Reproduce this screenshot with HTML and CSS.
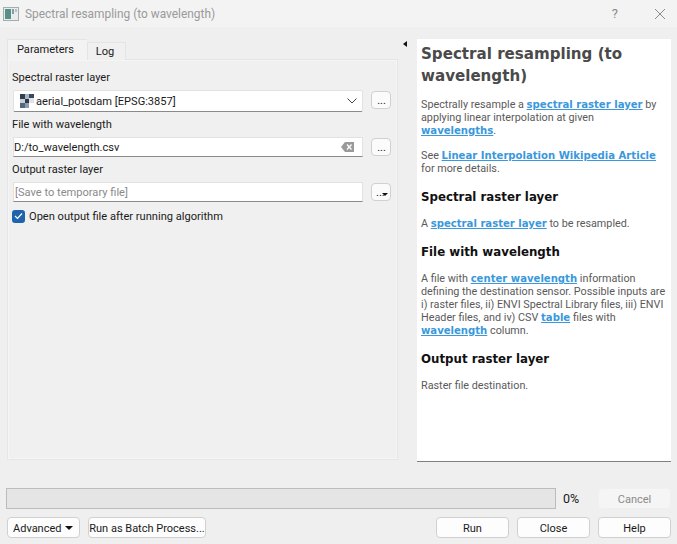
FILE: index.html
```html
<!DOCTYPE html>
<html lang="en">

<head>
    <meta charset="UTF-8">
    <title>Spectral resampling (to wavelength)</title>
    <link rel="stylesheet" href="styles.css">
</head>

<body>
    <div class="titlebar">
        <svg class="app-icon" width="16" height="16" viewBox="0 0 16 16">
            <rect x="0.5" y="1.5" width="15" height="13" fill="#e8eceb" stroke="#a3adad" />
            <rect x="2" y="3" width="6" height="10" fill="#5a8f88" />
            <rect x="9" y="3" width="2" height="5" fill="#8b9aa8" />
            <rect x="12" y="3" width="2" height="3" fill="#b4c1c7" />
        </svg>
        <span class="title">Spectral resampling (to wavelength)</span>
        <span class="title-help">?</span>
        <svg class="title-close" width="12" height="12" viewBox="0 0 12 12">
            <path d="M1 1 L11 11 M11 1 L1 11" stroke="#8a8a8a" stroke-width="1" fill="none" />
        </svg>
    </div>

    <div class="main">
        <div class="left">
            <div class="tabs">
                <div class="tab active">Parameters</div>
                <div class="tab">Log</div>
            </div>
            <div class="panel">
                <label class="field-label">Spectral raster layer</label>
                <div class="row">
                    <div class="combo">
                        <svg width="14" height="14" viewBox="0 0 14 14">
                            <rect x="0" y="0" width="5" height="5" fill="#2f3f52" />
                            <rect x="5" y="0" width="4" height="5" fill="#a9b3bd" />
                            <rect x="9" y="0" width="5" height="4" fill="#39485a" />
                            <rect x="0" y="5" width="5" height="4" fill="#c9d0d6" />
                            <rect x="5" y="5" width="4" height="4" fill="#2b3a4c" />
                            <rect x="9" y="4" width="5" height="5" fill="#dfe3e7" />
                            <rect x="0" y="9" width="5" height="5" fill="#53677c" />
                            <rect x="5" y="9" width="4" height="5" fill="#8d9cab" />
                        </svg>
                        <span class="combo-text">aerial_potsdam [EPSG:3857]</span>
                        <svg class="chevron" width="10" height="6" viewBox="0 0 10 6">
                            <path d="M0.5 0.5 L5 5 L9.5 0.5" stroke="#444" fill="none" />
                        </svg>
                    </div>
                    <button class="dots">...</button>
                </div>
                <label class="field-label">File with wavelength</label>
                <div class="row">
                    <div class="input">
                        <span class="input-text">D:/to_wavelength.csv</span>
                        <svg width="13" height="10" viewBox="0 0 13 10">
                            <path d="M4 0 H13 V10 H4 L0 5 Z" fill="#9a9a9a" />
                            <path d="M6 2.5 L10.5 7.5 M10.5 2.5 L6 7.5" stroke="#fff" stroke-width="1.3" />
                        </svg>
                    </div>
                    <button class="dots">...</button>
                </div>
                <label class="field-label">Output raster layer</label>
                <div class="row">
                    <div class="input">
                        <span class="input-text placeholder">[Save to temporary file]</span>
                    </div>
                    <button class="dots menu">...<span class="small-arrow"></span></button>
                </div>
                <div class="check-row">
                    <span class="checkbox">
                        <svg width="9" height="8" viewBox="0 0 9 8">
                            <path d="M1 4 L3.5 6.5 L8 1.5" stroke="#fff" stroke-width="1.2" fill="none" />
                        </svg>
                    </span>
                    <span>Open output file after running algorithm</span>
                </div>
            </div>
        </div>

        <div class="splitter"><span class="left-arrow"></span></div>

        <div class="help">
            <h1>Spectral resampling (to wavelength)</h1>
            <p>Spectrally resample a <a href="#">spectral raster layer</a> by applying linear interpolation at given <a href="#">wavelengths</a>.</p>
            <p>See <a href="#">Linear Interpolation Wikipedia Article</a> for more details.</p>
            <h2>Spectral raster layer</h2>
            <p>A <a href="#">spectral raster layer</a> to be resampled.</p>
            <h2>File with wavelength</h2>
            <p>A file with <a href="#">center wavelength</a> information defining the destination sensor. Possible inputs are i) raster files, ii) ENVI Spectral Library files, iii) ENVI Header files, and iv) CSV <a href="#">table</a> files with <a href="#">wavelength</a> column.</p>
            <h2>Output raster layer</h2>
            <p>Raster file destination.</p>
        </div>
    </div>

    <div class="progress-row">
        <div class="progress"></div>
        <span class="percent">0%</span>
        <button class="btn disabled">Cancel</button>
    </div>

    <div class="button-row">
        <button class="btn advanced">Advanced<span class="small-arrow"></span></button>
        <button class="btn batch">Run as Batch Process...</button>
        <span class="spacer"></span>
        <button class="btn">Run</button>
        <button class="btn">Close</button>
        <button class="btn">Help</button>
    </div>
</body>

</html>
```

FILE: styles.css
```css
html,
body {
    height: 100%;
}

body {
    margin: 0;
    width: 677px;
    height: 544px;
    overflow: hidden;
    display: flex;
    flex-direction: column;
    background-color: #efefef;
    font-family: Roboto, Arial, sans-serif;
    font-size: 11.1px;
    color: #1a1a1a;
}

.titlebar {
    height: 27px;
    display: flex;
    align-items: center;
    padding: 0 11px 0 3px;
    background-color: #f3f3f3;
}

.app-icon {
    margin-right: 6px;
}

.title {
    flex: 1;
    font-size: 11.9px;
    color: #9a9a9a;
}

.title-help {
    margin-right: 36px;
    font-size: 13px;
    color: #8a8a8a;
}

.main {
    height: 434px;
    display: flex;
    padding-left: 6px;
}

.left {
    width: 392px;
    padding-top: 13px;
}

.tabs {
    display: flex;
    height: 19px;
    padding-left: 1px;
}

.tab {
    width: 34px;
    height: 17px;
    margin-top: 2px;
    padding-right: 3px;
    line-height: 18px;
    text-align: center;
    background-color: #f0f0f0;
    border: 1px solid #e4e4e4;
    border-bottom: none;
}

.tab.active {
    width: 75px;
    height: 20px;
    margin-top: -1px;
    padding-right: 4px;
    line-height: 19px;
    background-color: #f3f3f3;
    border-right: none;
    position: relative;
    z-index: 1;
}

.panel {
    height: 401px;
    box-sizing: border-box;
    margin-left: 1px;
    padding: 7px 6px 0 4px;
    background-color: #f0f0f0;
    border: 1px solid #e6e6e6;
    border-top-color: #e4e4e4;
    box-shadow: inset 0 0 0 1px #f5f5f5;
}

.field-label {
    display: block;
    height: 22px;
    margin-bottom: 1px;
    line-height: 21px;
    white-space: nowrap;
}

.row {
    display: flex;
    align-items: flex-start;
    gap: 8px;
    margin-bottom: 2px;
}

.combo,
.input {
    flex: 1;
    box-sizing: border-box;
    display: flex;
    align-items: center;
    margin-left: 1px;
    background-color: #fff;
    border: 1px solid #e2e2e2;
    border-bottom: 1px solid #8a8a8a;
}

.combo {
    height: 22px;
    padding: 0 5px 0 6px;
    border-radius: 2px;
}

.combo-text {
    flex: 1;
    margin-left: 2px;
}

.input {
    height: 20px;
    padding: 0 8px 0 0;
}

.input-text {
    flex: 1;
}

.placeholder {
    padding-left: 1px;
    color: #8a8a8a;
}

.dots {
    width: 20px;
    height: 18px;
    margin-top: 1px;
    padding: 0 0 0 1px;
    position: relative;
    background-color: #fbfbfb;
    border: 1px solid #d0d0d0;
    border-radius: 4px;
    font-family: inherit;
    font-size: 11px;
    line-height: 18px;
    color: #1a1a1a;
}

.dots.menu {
    text-align: left;
    padding-left: 4px;
}

.dots.menu .small-arrow {
    position: absolute;
    right: 2px;
    bottom: 4px;
    border-width: 3px 3px 0;
}

.small-arrow {
    display: inline-block;
    border-style: solid;
    border-width: 4px 4px 0;
    border-color: #111 transparent transparent;
}

.check-row {
    display: flex;
    align-items: center;
    gap: 4px;
    height: 18px;
    margin: 5px 0 0;
}

.checkbox {
    width: 13px;
    height: 13px;
    display: flex;
    align-items: center;
    justify-content: center;
    background-color: #1f63ad;
    border-radius: 3px;
}

.splitter {
    width: 19px;
    padding-top: 14px;
    box-sizing: border-box;
    padding-left: 5px;
}

.left-arrow {
    display: block;
    width: 0;
    border-style: solid;
    border-width: 3px 4px 3px 0;
    border-color: transparent #111 transparent transparent;
}

.help {
    width: 254px;
    height: 423px;
    box-sizing: border-box;
    margin: 12px 0 0;
    padding: 4px 4px 0;
    overflow: hidden;
    background-color: #fff;
    border-bottom: 1px solid #808080;
    font-size: 10.8px;
    line-height: 13px;
    color: #5a5a5a;
}

.help h1 {
    margin: 0 0 11px;
    font-family: "DejaVu Sans", sans-serif;
    font-size: 15.1px;
    line-height: 22px;
    color: #4a4a4a;
}

.help h2 {
    margin: 14px 0 12px;
    font-family: "DejaVu Sans", sans-serif;
    font-size: 11.8px;
    line-height: 16px;
    color: #111;
}

.help p {
    margin: 0 0 12px;
}

.help a {
    font-family: "DejaVu Sans", sans-serif;
    font-weight: bold;
    font-size: 10.1px;
    line-height: 1;
    color: #3a98dc;
}

.progress-row {
    display: flex;
    align-items: center;
    height: 21px;
    margin-top: 27px;
    padding-left: 6px;
}

.progress {
    width: 548px;
    height: 19px;
    background-color: #e5e5e5;
    border: 1px solid #bcbcbc;
}

.percent {
    width: 42px;
    padding-left: 7px;
    box-sizing: border-box;
    font-size: 12.5px;
}

.button-row {
    display: flex;
    gap: 8px;
    margin-top: 8px;
    padding: 0 6px 0 7px;
}

.btn {
    width: 73px;
    height: 21px;
    padding: 1px 0 0;
    background-color: #fdfdfd;
    border: 1px solid #d0d0d0;
    border-radius: 4px;
    font-family: inherit;
    font-size: 11px;
    white-space: nowrap;
    color: #1a1a1a;
}

.btn.disabled {
    background-color: #f5f5f5;
    border-color: #f0f0f0;
    color: #8a8a8a;
}

.btn.advanced {
    display: flex;
    align-items: center;
    justify-content: space-between;
    padding: 1px 6px 0 5px;
}

.btn.batch {
    width: 118px;
}

.spacer {
    flex: 1;
}
```
